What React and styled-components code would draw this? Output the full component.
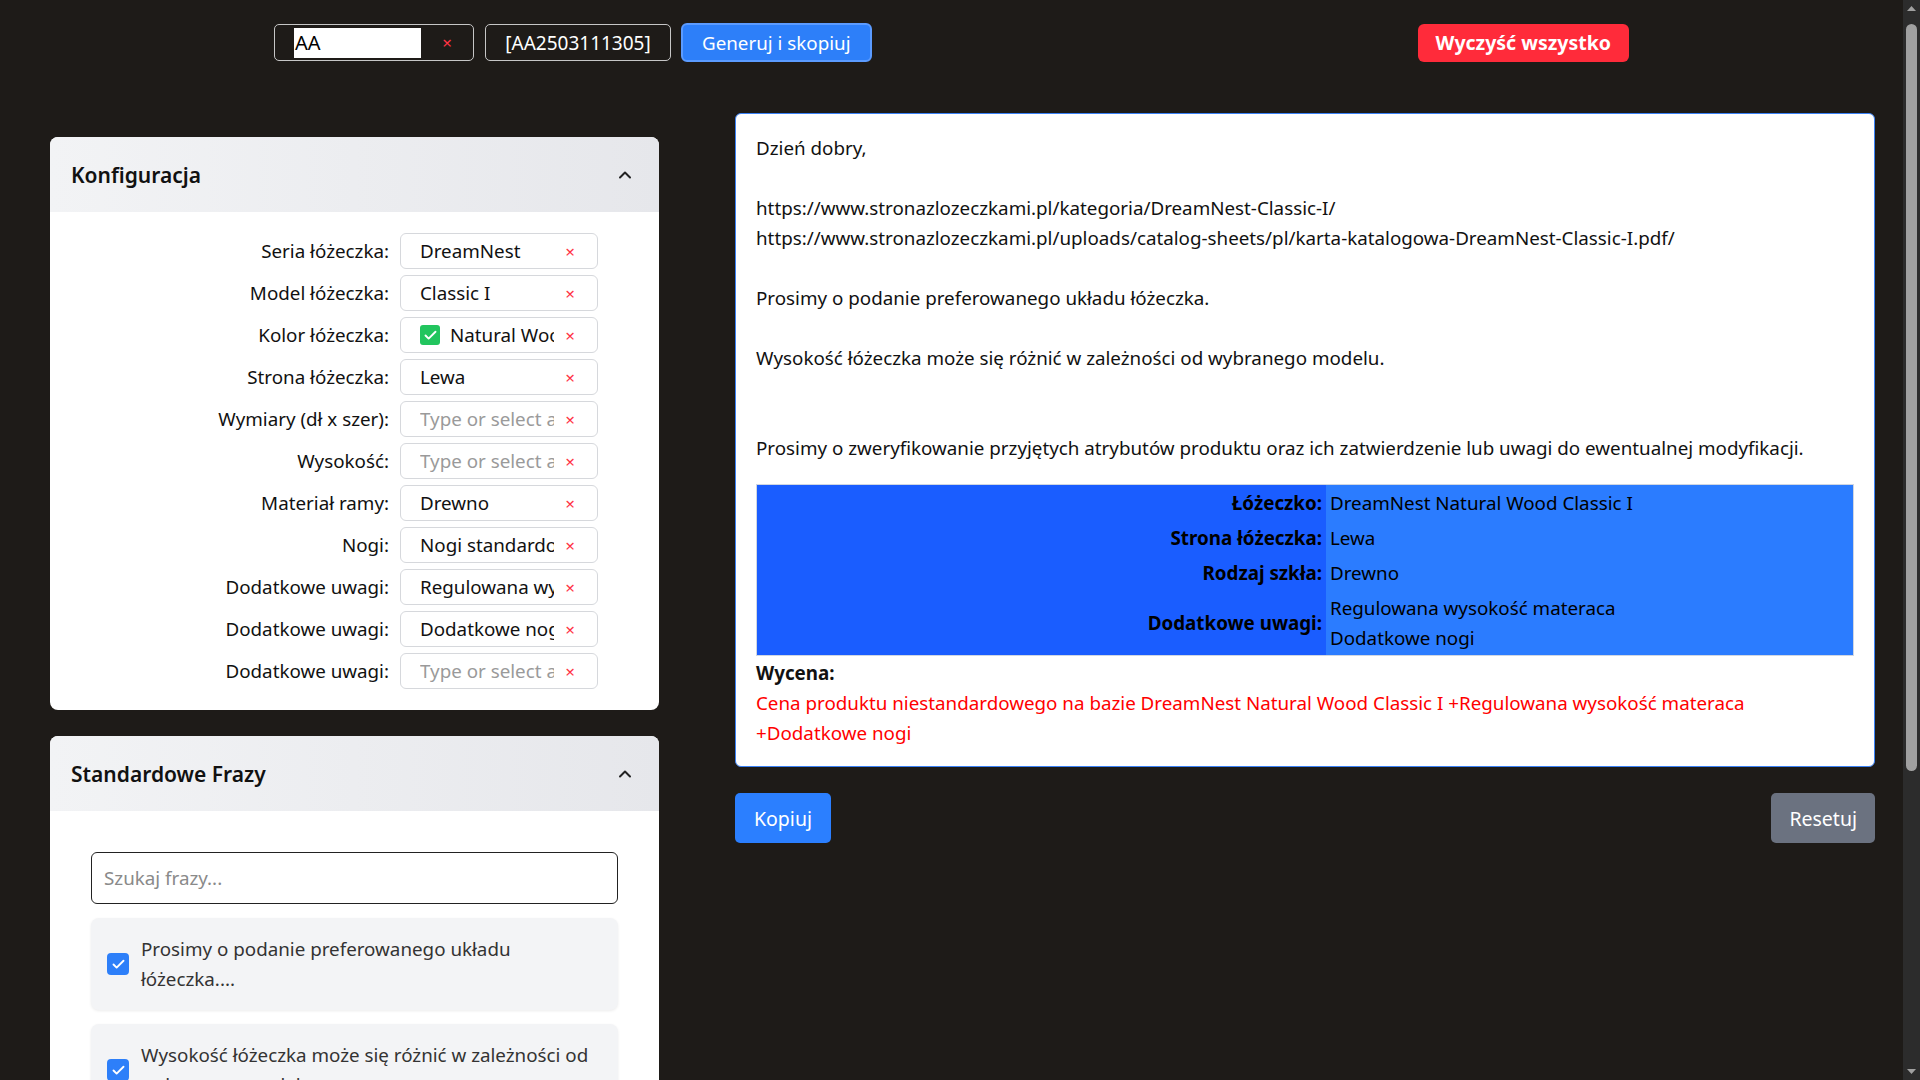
import React from 'react';
import styled, { createGlobalStyle } from 'styled-components';
import { ChevronUp, Check } from 'lucide-react';

const GlobalStyle = createGlobalStyle`
  html, body { height: 100%; }
  body {
    margin: 0;
    background: #1e1b18;
    font-family: "Noto Sans", "Open Sans", sans-serif;
    color: #111;
    overflow: hidden;
  }
  #root { height: 100%; }
`;

const Page = styled.div`
  display: flex;
  height: 100vh;
  overflow: hidden;
  background: #1e1b18;
`;

const Content = styled.div`
  flex: 1;
  min-width: 0;
  overflow-y: auto;
  scrollbar-width: none;
  &::-webkit-scrollbar { display: none; }
`;

const ScrollTrack = styled.div`
  width: 17px;
  flex-shrink: 0;
  background: #2c2c2c;
  display: flex;
  flex-direction: column;
  align-items: center;
`;

const ScrollArrow = styled.div`
  height: 17px;
  display: flex;
  align-items: center;
  justify-content: center;
`;

const ScrollThumb = styled.div`
  width: 11px;
  height: 747px;
  margin-top: 7px;
  border-radius: 6px;
  background: #a0a0a0;
`;

const Spacer = styled.div`
  flex: 1;
`;

const TopBar = styled.div`
  display: flex;
  align-items: center;
  gap: 10px;
  padding: 23px 0 0 274px;
  height: 39px;
`;

const ClearableBox = styled.div`
  display: flex;
  align-items: center;
  box-sizing: border-box;
  height: 37px;
  width: 200px;
  padding: 0 18px 0 19px;
  border: 1px solid #c6c6c6;
  border-radius: 5px;
  gap: 10px;
`;

const WhiteInput = styled.div`
  width: 135px;
  height: 30px;
  background: #fff;
  color: #000;
  font-size: 20px;
  line-height: 30px;
  padding-left: 1px;
  box-sizing: border-box;
`;

const CodeBox = styled.div`
  box-sizing: border-box;
  height: 37px;
  width: 186px;
  border: 1px solid #c6c6c6;
  border-radius: 5px;
  color: #fff;
  font-size: 19px;
  display: flex;
  align-items: center;
  justify-content: center;
  margin-left: 1px;
`;

const ActionButton = styled.button`
  font-family: inherit;
  box-sizing: border-box;
  height: ${p => p.$h || 39}px;
  padding: 0 ${p => p.$px || 17}px;
  border-radius: ${p => p.$r || 6}px;
  border: ${p => (p.$ring ? '2px solid #5b9bff' : 'none')};
  background: ${p => p.$bg};
  color: #fff;
  font-size: ${p => p.$fs || 18.8}px;
  font-weight: ${p => (p.$bold ? 700 : 400)};
  margin-left: ${p => p.$ml || 0}px;
  white-space: nowrap;
  cursor: pointer;
`;

const Main = styled.div`
  display: flex;
  gap: 76px;
  padding: 51px 28px 37px 50px;
  align-items: flex-start;
`;

const LeftColumn = styled.div`
  width: 609px;
  flex-shrink: 0;
  margin-top: 24px;
  display: flex;
  flex-direction: column;
  gap: 26px;
`;

const Card = styled.section`
  background: #fff;
  border-radius: 8px;
  overflow: hidden;
`;

const CardHeader = styled.header`
  height: 75px;
  display: flex;
  align-items: center;
  justify-content: space-between;
  padding: 0 24px 0 21px;
  background: linear-gradient(to right, #f2f3f5, #e6e7eb);
  color: #111;
`;

const CardTitle = styled.h2`
  margin: 0;
  font-size: 21px;
  font-weight: 600;
`;

const FormGrid = styled.div`
  display: grid;
  grid-template-columns: 1fr 198px;
  column-gap: 11px;
  row-gap: 6px;
  align-items: center;
  padding: 21px 61px 21px 20px;
`;

const FieldLabel = styled.label`
  text-align: right;
  font-size: 18.8px;
  color: #111;
  white-space: nowrap;
`;

const Field = styled.div`
  box-sizing: border-box;
  height: 36px;
  border: 1px solid #d6d8dc;
  border-radius: 6px;
  display: flex;
  align-items: center;
  padding: 0 19px 0 19px;
`;

const FieldValue = styled.span`
  flex: 1;
  min-width: 0;
  overflow: hidden;
  white-space: nowrap;
  font-size: 18.8px;
  color: ${p => (p.$placeholder ? '#9a9a9a' : '#111')};
  display: flex;
  align-items: center;
  gap: 10px;
`;

const ClearX = styled.span`
  width: 16px;
  margin-left: 8px;
  text-align: center;
  color: #ff3344;
  font-size: 17px;
  line-height: 1;
  flex-shrink: 0;
`;

const GreenCheck = styled.span`
  width: 20px;
  height: 20px;
  border-radius: 3px;
  background: #22c55e;
  display: inline-flex;
  align-items: center;
  justify-content: center;
  flex-shrink: 0;
`;

const PhraseBody = styled.div`
  padding: 41px;
  display: flex;
  flex-direction: column;
  gap: 14px;
`;

const SearchInput = styled.input`
  box-sizing: border-box;
  height: 52px;
  width: 100%;
  border: 1px solid #222;
  border-radius: 6px;
  padding: 0 12px;
  font-family: inherit;
  font-size: 18.8px;
  background: #fff;
  color: #111;
  &::placeholder { color: #8a8a8a; }
`;

const PhraseItem = styled.div`
  background: #f3f4f6;
  border-radius: 8px;
  padding: 16px 20px 16px 16px;
  display: flex;
  align-items: center;
  gap: 12px;
  box-shadow: 0 1px 3px rgba(0, 0, 0, 0.08);
`;

const BlueCheck = styled.span`
  width: 22px;
  height: 22px;
  border-radius: 4px;
  background: #2d7ff9;
  display: inline-flex;
  align-items: center;
  justify-content: center;
  flex-shrink: 0;
`;

const PhraseText = styled.span`
  font-size: 18.8px;
  line-height: 30px;
  color: #333;
`;

const RightColumn = styled.div`
  flex: 1;
  min-width: 0;
  display: flex;
  flex-direction: column;
  gap: 26px;
`;

const Preview = styled.div`
  background: #fff;
  border: 1px solid #3b82f6;
  border-radius: 6px;
  padding: 19px 20px 18px 20px;
  font-size: 18.8px;
  line-height: 30px;
  color: #111;
`;

const Line = styled.div`
  min-height: 30px;
  white-space: nowrap;
`;

const SummaryTable = styled.table`
  width: 100%;
  border-collapse: collapse;
  border: 1px solid #cfd6e2;
  margin: 21px 0 2px;
`;

const LabelCell = styled.th`
  width: 561px;
  background: #1a5dff;
  text-align: right;
  font-weight: 700;
  padding: 3px 4px 2px;
  color: #000;
  vertical-align: middle;
`;

const ValueCell = styled.td`
  background: #2b7cff;
  padding: 3px 4px 2px;
  color: #000;
  vertical-align: middle;
`;

const Bold = styled.div`
  font-weight: 700;
`;

const Price = styled.div`
  color: #ff0000;
`;

const ButtonRow = styled.div`
  display: flex;
  justify-content: space-between;
`;

const fields = [
  { label: 'Seria łóżeczka:', value: 'DreamNest' },
  { label: 'Model łóżeczka:', value: 'Classic I' },
  { label: 'Kolor łóżeczka:', value: 'Natural Wood', check: true },
  { label: 'Strona łóżeczka:', value: 'Lewa' },
  { label: 'Wymiary (dł x szer):', value: '' },
  { label: 'Wysokość:', value: '' },
  { label: 'Materiał ramy:', value: 'Drewno' },
  { label: 'Nogi:', value: 'Nogi standardowe' },
  { label: 'Dodatkowe uwagi:', value: 'Regulowana wysokość materaca' },
  { label: 'Dodatkowe uwagi:', value: 'Dodatkowe nogi' },
  { label: 'Dodatkowe uwagi:', value: '' },
];

const phrases = [
  'Prosimy o podanie preferowanego układu łóżeczka....',
  'Wysokość łóżeczka może się różnić w zależności od wybranego modelu....',
  'Prosimy o zweryfikowanie przyjętych atrybutów produktu oraz...',
  'Czas realizacji zamówienia wynosi około 14 dni roboczych....',
  'W razie pytań pozostajemy do dyspozycji....',
];

const previewLines = [
  'Dzień dobry,',
  '',
  'https://www.stronazlozeczkami.pl/kategoria/DreamNest-Classic-I/',
  'https://www.stronazlozeczkami.pl/uploads/catalog-sheets/pl/karta-katalogowa-DreamNest-Classic-I.pdf/',
  '',
  'Prosimy o podanie preferowanego układu łóżeczka.',
  '',
  'Wysokość łóżeczka może się różnić w zależności od wybranego modelu.',
  '',
  '',
  'Prosimy o zweryfikowanie przyjętych atrybutów produktu oraz ich zatwierdzenie lub uwagi do ewentualnej modyfikacji.',
];

function Triangle({ down }) {
  return (
    <svg width="9" height="5" viewBox="0 0 9 5">
      <path d={down ? 'M0 0 L9 0 L4.5 5 Z' : 'M0 5 L9 5 L4.5 0 Z'} fill="#a0a0a0" />
    </svg>
  );
}

export default function App() {
  return (
    <Page>
      <GlobalStyle />
      <Content>
        <TopBar>
          <ClearableBox>
            <WhiteInput>AA</WhiteInput>
            <ClearX>×</ClearX>
          </ClearableBox>
          <CodeBox>[AA2503111305]</CodeBox>
          <ActionButton $bg="#2d7ff9" $ring $px={19}>Generuj i skopiuj</ActionButton>
          <ActionButton $bg="#ff2b3a" $bold $fs={19.5} $px={18} $h={38} $ml={536}>Wyczyść wszystko</ActionButton>
        </TopBar>

        <Main>
          <LeftColumn>
            <Card>
              <CardHeader>
                <CardTitle>Konfiguracja</CardTitle>
                <ChevronUp size={20} strokeWidth={2.4} color="#222" />
              </CardHeader>
              <FormGrid>
                {fields.map((f, i) => (
                  <React.Fragment key={i}>
                    <FieldLabel>{f.label}</FieldLabel>
                    <Field>
                      <FieldValue $placeholder={!f.value}>
                        {f.check && (
                          <GreenCheck>
                            <Check size={15} strokeWidth={3} color="#fff" />
                          </GreenCheck>
                        )}
                        {f.value || 'Type or select an option'}
                      </FieldValue>
                      <ClearX>×</ClearX>
                    </Field>
                  </React.Fragment>
                ))}
              </FormGrid>
            </Card>

            <Card>
              <CardHeader>
                <CardTitle>Standardowe Frazy</CardTitle>
                <ChevronUp size={20} strokeWidth={2.4} color="#222" />
              </CardHeader>
              <PhraseBody>
                <SearchInput placeholder="Szukaj frazy..." />
                {phrases.map((p, i) => (
                  <PhraseItem key={i}>
                    <BlueCheck>
                      <Check size={15} strokeWidth={3} color="#fff" />
                    </BlueCheck>
                    <PhraseText>{p}</PhraseText>
                  </PhraseItem>
                ))}
              </PhraseBody>
            </Card>
          </LeftColumn>

          <RightColumn>
            <Preview>
              {previewLines.map((l, i) => (
                <Line key={i}>{l}</Line>
              ))}
              <SummaryTable>
                <tbody>
                  <tr>
                    <LabelCell>Łóżeczko:</LabelCell>
                    <ValueCell>DreamNest Natural Wood Classic I</ValueCell>
                  </tr>
                  <tr>
                    <LabelCell>Strona łóżeczka:</LabelCell>
                    <ValueCell>Lewa</ValueCell>
                  </tr>
                  <tr>
                    <LabelCell>Rodzaj szkła:</LabelCell>
                    <ValueCell>Drewno</ValueCell>
                  </tr>
                  <tr>
                    <LabelCell>Dodatkowe uwagi:</LabelCell>
                    <ValueCell>
                      Regulowana wysokość materaca
                      <br />
                      Dodatkowe nogi
                    </ValueCell>
                  </tr>
                </tbody>
              </SummaryTable>
              <Bold>Wycena:</Bold>
              <Price>
                Cena produktu niestandardowego na bazie DreamNest Natural Wood Classic I +Regulowana wysokość materaca +Dodatkowe nogi
              </Price>
            </Preview>
            <ButtonRow>
              <ActionButton $bg="#2b7fff" $h={50} $px={19} $r={5} $fs={19.5}>Kopiuj</ActionButton>
              <ActionButton $bg="#6b7280" $h={50} $px={18} $r={5} $fs={19.5}>Resetuj</ActionButton>
            </ButtonRow>
          </RightColumn>
        </Main>
      </Content>
      <ScrollTrack>
        <ScrollArrow>
          <Triangle />
        </ScrollArrow>
        <ScrollThumb />
        <Spacer />
        <ScrollArrow>
          <Triangle down />
        </ScrollArrow>
      </ScrollTrack>
    </Page>
  );
}
